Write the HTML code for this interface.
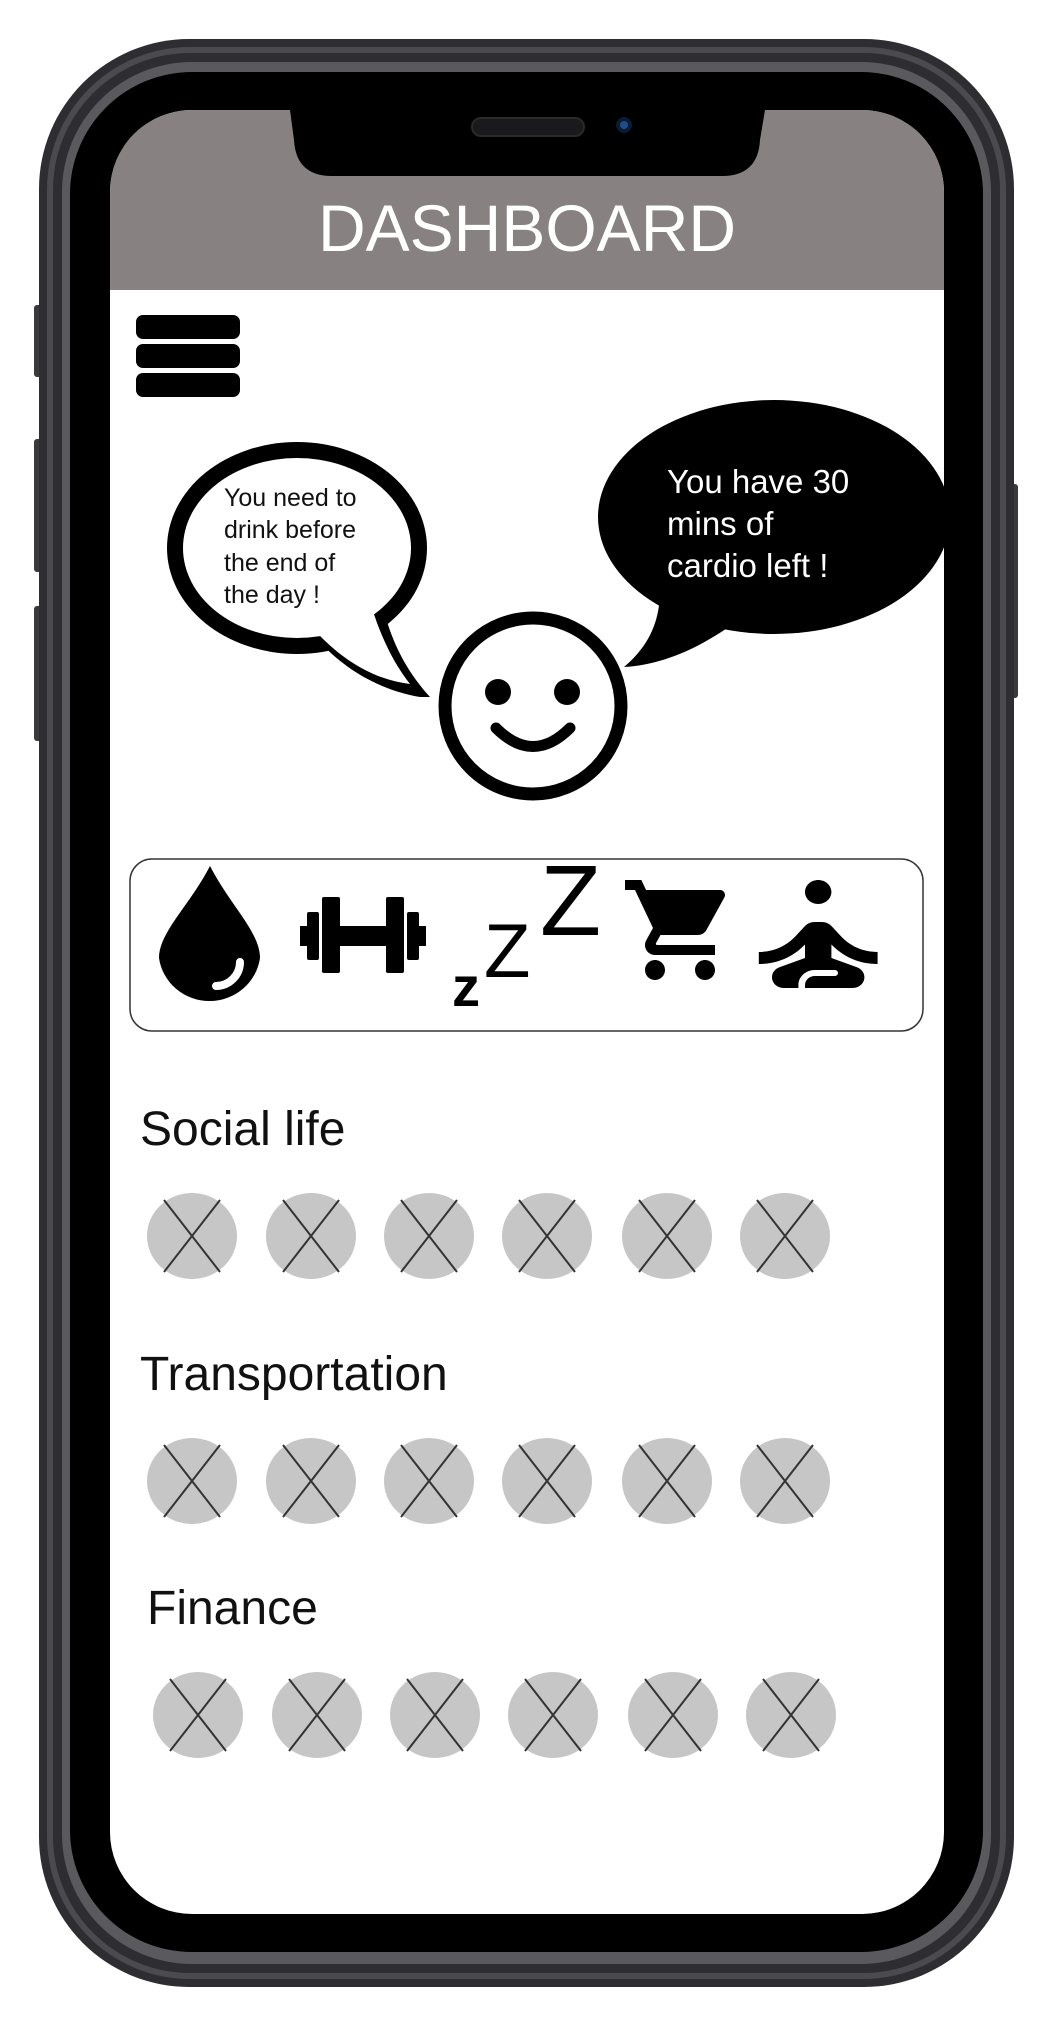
<!DOCTYPE html>
<html><head><meta charset="utf-8"><style>
html,body{margin:0;padding:0;background:#fff;}
svg{display:block;}
text{font-family:"Liberation Sans",sans-serif;}
</style></head><body>
<svg width="1048" height="2025" viewBox="0 0 1048 2025" xmlns="http://www.w3.org/2000/svg">
<defs>
<clipPath id="scr"><rect x="110" y="110" width="834" height="1804" rx="82" ry="82"/></clipPath>
</defs>
<rect x="34" y="305" width="10" height="72" rx="3" fill="#3a3a3e"/>
<rect x="34" y="439" width="10" height="133" rx="3" fill="#3a3a3e"/>
<rect x="34" y="606" width="10" height="135" rx="3" fill="#3a3a3e"/>
<rect x="1008" y="484" width="10" height="214" rx="3" fill="#3a3a3e"/>
<rect x="39" y="39" width="975" height="1948" rx="150" fill="#2e2e32"/>
<rect x="50" y="50" width="953" height="1926" rx="140" fill="none" stroke="#4a4a4f" stroke-width="6"/>
<rect x="62" y="62" width="929" height="1902" rx="130" fill="#5a5a5e"/>
<rect x="70" y="72" width="913" height="1880" rx="122" fill="#000"/>
<g clip-path="url(#scr)">
<rect x="110" y="110" width="834" height="1804" fill="#fff"/>
<rect x="110" y="110" width="834" height="180" fill="#888181"/>
<ellipse cx="774" cy="517" rx="176" ry="117" fill="#000"/>
<path d="M660 590 L745 615 C700 650 660 665 624 667 C650 645 660 620 660 590Z" fill="#000"/>
</g>
<path d="M290 110 L765 110 L760 140 Q758 176 722 176 L332 176 Q296 176 294 140 Z" fill="#000"/>
<rect x="472" y="118" width="112" height="18" rx="9" fill="#1a1a1c" stroke="#2a2a2a" stroke-width="2"/>
<circle cx="624" cy="125" r="8" fill="#0d1a33"/><circle cx="624" cy="125" r="4" fill="#1f4d8c"/>
<text x="527" y="251" font-size="66" fill="#fff" text-anchor="middle">DASHBOARD</text>
<rect x="136" y="315" width="104" height="24" rx="7" fill="#000"/>
<rect x="136" y="344" width="104" height="24" rx="7" fill="#000"/>
<rect x="136" y="373" width="104" height="24" rx="7" fill="#000"/>
<ellipse cx="297" cy="548" rx="130" ry="106" fill="#000"/>
<path d="M318 640 L385 615 C395 650 410 675 430 697 L420 697 C380 690 345 670 318 640Z" fill="#000"/>
<ellipse cx="297" cy="548" rx="114" ry="90" fill="#fff"/>
<path d="M310 625 L372 608 C382 640 395 665 410 684 C375 680 340 660 310 625Z" fill="#fff"/>
<g font-size="25" fill="#111">
<text x="224" y="506">You need to</text>
<text x="224" y="538">drink before</text>
<text x="224" y="571">the end of</text>
<text x="224" y="603">the day !</text>
</g>
<g font-size="33" fill="#fff">
<text x="667" y="493">You have 30</text>
<text x="667" y="535">mins of</text>
<text x="667" y="577">cardio left !</text>
</g>
<circle cx="533" cy="706" r="88" fill="#fff" stroke="#000" stroke-width="13"/>
<circle cx="498" cy="692" r="13" fill="#000"/>
<circle cx="567" cy="692" r="13" fill="#000"/>
<path d="M496 728 Q533 765 570 728" fill="none" stroke="#000" stroke-width="11" stroke-linecap="round"/>
<rect x="130" y="859" width="793" height="172" rx="22" fill="#fff" stroke="#333" stroke-width="1.5"/>
<path d="M210 866 C190 905 159 932 159 958 A51 50 0 0 0 260 958 C260 932 230 905 210 866Z" fill="#000"/>
<path d="M216 986 A24 24 0 0 0 240 962" fill="none" stroke="#fff" stroke-width="8" stroke-linecap="round"/>
<g fill="#000">
<rect x="300" y="926" width="8" height="20" />
<rect x="307" y="912" width="12" height="48" rx="2"/>
<rect x="322" y="897" width="18" height="76" rx="2"/>
<rect x="340" y="926" width="46" height="20"/>
<rect x="386" y="897" width="18" height="76" rx="2"/>
<rect x="407" y="912" width="12" height="48" rx="2"/>
<rect x="418" y="926" width="8" height="20"/>
</g>
<text x="452" y="1006" font-size="56" font-weight="bold" fill="#000">z</text>
<text x="484" y="977" font-size="76" fill="#000">Z</text>
<text x="540" y="935" font-size="100" fill="#000">Z</text>
<path transform="translate(620,870) scale(5)" fill="#000" d="M7 18c-1.1 0-1.99.9-1.99 2S5.9 22 7 22s2-.9 2-2-.9-2-2-2zM1 2v2h2l3.6 7.59-1.35 2.45c-.16.28-.25.61-.25.96 0 1.1.9 2 2 2h12v-2H7.42c-.14 0-.25-.11-.25-.25l.03-.12.9-1.63h7.45c.75 0 1.41-.41 1.75-1.03l3.58-6.49A1.003 1.003 0 0020 4H5.21l-.94-2H1zm16 16c-1.1 0-1.99.9-1.99 2s.89 2 1.99 2 2-.9 2-2-.9-2-2-2z"/>
<path transform="translate(739,868) scale(6.6,6)" fill="#000" d="M12 2c1.1 0 2 .9 2 2s-.9 2-2 2-2-.9-2-2 .9-2 2-2zm9 14v-2c-2.24 0-4.16-.96-5.6-2.68l-1.34-1.6c-.38-.46-.94-.72-1.53-.72h-1.05c-.59 0-1.15.26-1.53.72l-1.34 1.6C7.16 13.04 5.24 14 3 14v2c2.77 0 5.19-1.17 7-3.25V15l-3.88 1.55c-.67.27-1.12.93-1.12 1.66C5 19.2 5.8 20 6.79 20H9v-.5c0-1.38 1.12-2.5 2.5-2.5h3c.28 0 .5.22.5.5s-.22.5-.5.5h-3c-.83 0-1.5.67-1.5 1.5v.5h7.21c.99 0 1.79-.8 1.79-1.79 0-.73-.45-1.39-1.12-1.66L14 15v-2.25c1.81 2.08 4.23 3.25 7 3.25z"/>
<g font-size="48" fill="#111">
<text x="140" y="1145">Social life</text>
<text x="140" y="1390">Transportation</text>
<text x="147" y="1624">Finance</text>
</g>
<g id="row">
<g fill="#c6c6c6">
<ellipse cx="192" cy="1236" rx="45" ry="43"/><ellipse cx="311" cy="1236" rx="45" ry="43"/><ellipse cx="429" cy="1236" rx="45" ry="43"/><ellipse cx="547" cy="1236" rx="45" ry="43"/><ellipse cx="667" cy="1236" rx="45" ry="43"/><ellipse cx="785" cy="1236" rx="45" ry="43"/>
</g>
<g stroke="#333" stroke-width="2">
<path d="M164 1200 L220 1272 M220 1200 L164 1272"/>
<path d="M283 1200 L339 1272 M339 1200 L283 1272"/>
<path d="M401 1200 L457 1272 M457 1200 L401 1272"/>
<path d="M519 1200 L575 1272 M575 1200 L519 1272"/>
<path d="M639 1200 L695 1272 M695 1200 L639 1272"/>
<path d="M757 1200 L813 1272 M813 1200 L757 1272"/>
</g>
</g>
<use href="#row" transform="translate(0,245)"/>
<use href="#row" transform="translate(6,479)"/>
</svg>
</body></html>
